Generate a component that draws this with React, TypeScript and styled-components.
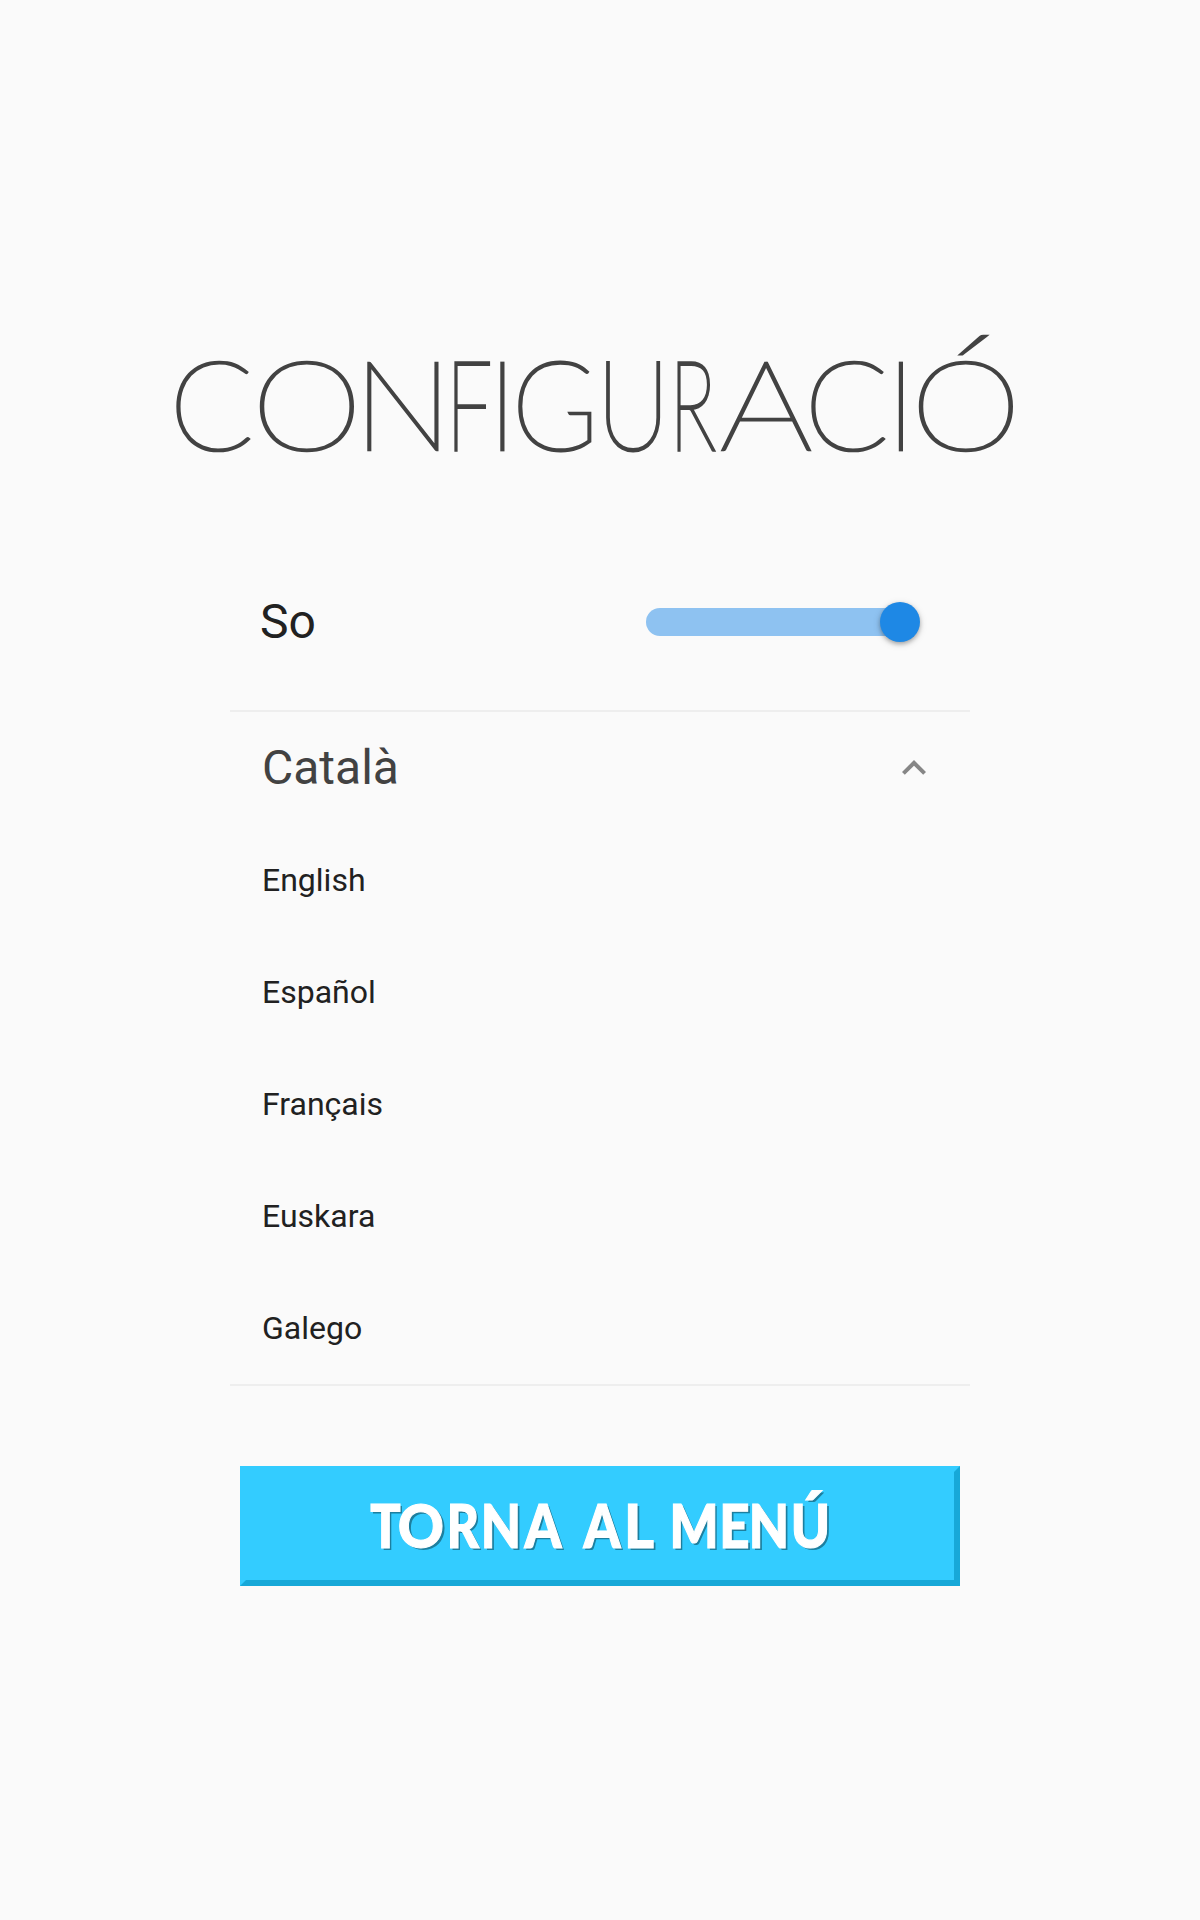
import React from "react";
import styled, { createGlobalStyle } from "styled-components";

const GlobalStyle = createGlobalStyle`
  *, *::before, *::after { box-sizing: border-box; }
  body { margin: 0; background: #fafafa; font-family: Roboto, sans-serif; color: #212121; }
`;

const Page = styled.main`
  min-height: 1920px;
  display: flex;
  flex-direction: column;
  align-items: center;
  padding-top: 328px;
  background: #fafafa;
`;

const Title = styled.h1`
  margin: 0;
  width: 848px;
  height: 151px;
  white-space: nowrap;
  font-family: Lato, sans-serif;
  font-weight: 100;
  font-size: 124px;
  line-height: 148px;
  color: #424242;
`;

/* A glyph centred on a slot of the given width; 20px of bleed on both sides. */
const Letter = styled.span<{ $width: number; $gap: number; $scale: number; $stroke: number }>`
  display: inline-block;
  text-align: center;
  width: ${(p) => p.$width + 40}px;
  margin-left: -20px;
  margin-right: ${(p) => p.$gap - 20}px;
  transform: scaleX(${(p) => p.$scale});
  -webkit-text-stroke: ${(p) => p.$stroke}px currentColor;
`;

const Panel = styled.section`
  width: 740px;
  display: flex;
  flex-direction: column;
  padding-top: 55px;
`;

const SoundRow = styled.div`
  height: 176px;
  display: flex;
  align-items: center;
  justify-content: space-between;
  padding: 0 50px 0 30px;
`;

const SoundLabel = styled.label`
  font-size: 48px;
  line-height: 56px;
`;

const Slider = styled.div`
  width: 274px;
  height: 40px;
  display: flex;
  align-items: center;
`;

const Track = styled.div`
  flex: 1;
  height: 28px;
  margin-right: -20px;
  border-radius: 14px 0 0 14px;
  background: #8ec2f1;
`;

const Thumb = styled.div`
  position: relative;
  flex: none;
  width: 40px;
  height: 40px;
  border-radius: 50%;
  background: #1e88e5;
  box-shadow: 0 2px 4px rgba(0, 0, 0, 0.28), 0 2px 8px rgba(0, 0, 0, 0.12);
`;

const LanguageList = styled.div`
  border-top: 2px solid #eeeeee;
  border-bottom: 2px solid #eeeeee;
`;

const SelectedLanguage = styled.div`
  height: 112px;
  display: flex;
  align-items: center;
  justify-content: space-between;
  padding: 0 32px;
  font-size: 48px;
  color: #424242;
`;

const SelectedName = styled.span`
  padding-bottom: 2px;
`;

const Chevron = styled.svg`
  width: 48px;
  height: 48px;
  fill: #868686;
`;

const Language = styled.div`
  height: 112px;
  display: flex;
  align-items: center;
  padding: 0 32px;
  font-size: 32px;
`;

const MenuButton = styled.button`
  width: 720px;
  height: 120px;
  margin-top: 80px;
  padding: 0 0 2px 124px;
  text-align: left;
  white-space: nowrap;
  border: 6px solid;
  border-color: #33ccff #17a8d8 #17a8d8 #33ccff;
  background: #33ccff;
  color: #fff;
  font-family: Lato, sans-serif;
  font-weight: 900;
  font-size: 60px;
  line-height: 72px;
  text-shadow: 2.4px 2.4px 0 #1d7f9f;
`;

type Glyph = [char: string, width: number, gap: number, scale: number];

const title: Glyph[] = [
  ["C", 71, 13, 1],
  ["O", 94, 14, 1.14],
  ["N", 70, 16, 1.07],
  ["F", 30, 16, 0.66],
  ["I", 5, 14, 1],
  ["G", 72, 15, 0.95],
  ["U", 54, 15, 0.82],
  ["R", 35, 11, 0.63],
  ["A", 90, 0, 1.18],
  ["C", 71, 17, 1],
  ["I", 4, 16, 1],
  ["Ó", 94, 0, 1.14],
];

/* The last glyph of a word leaves the rest of its gap to the space character. */
const back: Glyph[][] = [
  [
    ["T", 31, -3, 0.84],
    ["O", 46, 3, 0.95],
    ["R", 32, 4, 0.83],
    ["N", 36, 4, 0.87],
    ["A", 40, 4.6, 0.88],
  ],
  [
    ["A", 40, 3, 0.88],
    ["L", 28, 4.6, 0.96],
  ],
  [
    ["M", 44, 5, 0.86],
    ["E", 27, 3, 0.88],
    ["N", 36, 5, 0.87],
    ["Ú", 37, 0, 0.88],
  ],
];

/* Narrowed glyphs get a slightly heavier outline to keep their stems even. */
const Lettering = ({ glyphs, outline }: { glyphs: Glyph[]; outline: number }) => (
  <>
    {glyphs.map(([char, width, gap, scale], i) => (
      <Letter
        key={i}
        $width={width}
        $gap={gap}
        $scale={scale}
        $stroke={outline + (1 - scale) * 2}
      >
        {char}
      </Letter>
    ))}
  </>
);

const languages = ["English", "Español", "Français", "Euskara", "Galego"];

export default function App() {
  return (
    <Page>
      <GlobalStyle />
      <Title>
        <Lettering glyphs={title} outline={2.7} />
      </Title>
      <Panel>
        <SoundRow>
          <SoundLabel>So</SoundLabel>
          <Slider>
            <Track />
            <Thumb />
          </Slider>
        </SoundRow>
        <LanguageList>
          <SelectedLanguage>
            <SelectedName>Català</SelectedName>
            <Chevron viewBox="0 0 24 24">
              <path d="M12 8l-6 6 1.41 1.41L12 10.83l4.59 4.58L18 14z" />
            </Chevron>
          </SelectedLanguage>
          {languages.map((name) => (
            <Language key={name}>{name}</Language>
          ))}
        </LanguageList>
      </Panel>
      <MenuButton>
        {back.map((word, i) => (
          <React.Fragment key={i}>
            {i > 0 && " "}
            <Lettering glyphs={word} outline={0.9} />
          </React.Fragment>
        ))}
      </MenuButton>
    </Page>
  );
}
